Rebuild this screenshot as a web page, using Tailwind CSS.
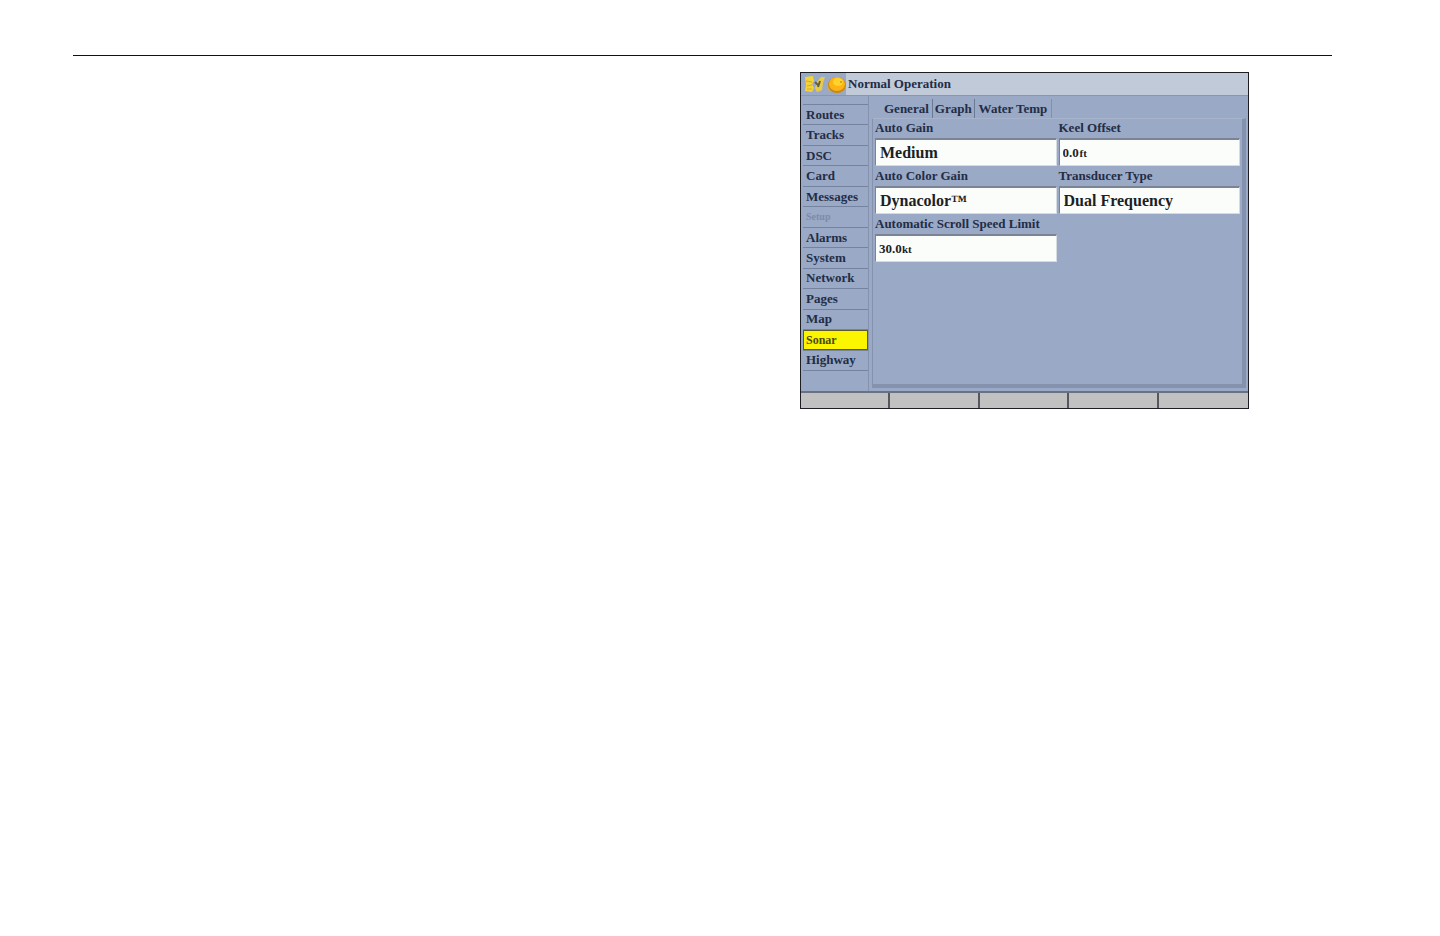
<!DOCTYPE html>
<html lang="en">

<head>
    <meta charset="UTF-8">
    <meta name="viewport" content="width=device-width, initial-scale=1.0">
    <title>Normal Operation</title>
    <script src="https://cdn.jsdelivr.net/npm/@tailwindcss/browser@4"></script>
</head>

<body class="bg-white font-['Liberation_Serif',serif]">

    <main class="pt-[55px] pl-[73px] pr-[108px]">
        <hr class="border-t border-[#111111]">

        <div class="mt-4 flex justify-end pr-[83px]">
            <!-- Chartplotter screen -->
            <section class="w-[449px] border border-[#1c1e24] bg-[#9aa9c5] text-[13px] leading-4 font-bold text-[#232d45]">

                <!-- Title bar -->
                <header class="flex h-[22px] items-stretch">
                    <div class="flex w-[45px] items-center pl-[3px]">
                        <svg class="h-5 w-[42px]" viewBox="0 0 42 20" aria-hidden="true">
                            <path d="M1 3 L9 2 L10 7 L8 10 L10 14 L8 18 L1 17 L2 11 Z" fill="#f3d337" />
                            <path d="M2 7 L8 8 M3 12 L8 11 M3 15 L8 15" stroke="#d9a92a" stroke-width="1" />
                            <path d="M13 8 L17 3 L21 3 L19 9 L18 16 L13 18 L11 14 Z" fill="#e9cb45" />
                            <path d="M11 8 L15 12 M16 7 L14 13" stroke="#5d6148" stroke-width="2" />
                            <path d="M23 13 L26 11 L29 8 L28 16 L25 17 Z" fill="#d9b03c" />
                            <ellipse cx="33" cy="11" rx="9" ry="8" fill="#c98715" />
                            <ellipse cx="33" cy="10" rx="8" ry="7" fill="#fbb414" />
                            <ellipse cx="34" cy="8" rx="5" ry="4" fill="#ffd32c" />
                            <circle cx="37" cy="8" r="1" fill="#d38e18" />
                        </svg>
                    </div>
                    <h1 class="flex-1 bg-[#c1cad9] pt-[3px] pl-[2px]">Normal Operation</h1>
                </header>

                <div class="flex h-[296px] border-t border-[#8996b0]">
                    <!-- Side menu -->
                    <nav class="w-[68px] border-r border-[#8492ae] pt-[8px] pl-[2px]">
                        <ul class="flex h-[267px] flex-col divide-y divide-[#75839f] border-y border-[#75839f]">
                            <li class="flex flex-1 items-center pl-[3px]"><a href="#">Routes</a></li>
                            <li class="flex flex-1 items-center pl-[3px]"><a href="#">Tracks</a></li>
                            <li class="flex flex-1 items-center pl-[3px]"><a href="#">DSC</a></li>
                            <li class="flex flex-1 items-center pl-[3px]"><a href="#">Card</a></li>
                            <li class="flex flex-1 items-center pl-[3px]"><a href="#">Messages</a></li>
                            <li class="flex flex-1 items-center pl-[3px] text-[10px] text-[#7d8ba8]"><a href="#">Setup</a></li>
                            <li class="flex flex-1 items-center pl-[3px]"><a href="#">Alarms</a></li>
                            <li class="flex flex-1 items-center pl-[3px]"><a href="#">System</a></li>
                            <li class="flex flex-1 items-center pl-[3px]"><a href="#">Network</a></li>
                            <li class="flex flex-1 items-center pl-[3px]"><a href="#">Pages</a></li>
                            <li class="flex flex-1 items-center pl-[3px]"><a href="#">Map</a></li>
                            <li class="flex flex-1 text-xs text-[#4a4a10]"><a href="#" aria-current="page" class="flex flex-1 items-center border border-[#5c5c28] bg-[#fbf600] pl-[2px]">Sonar</a></li>
                            <li class="flex flex-1 items-center pl-[3px]"><a href="#">Highway</a></li>
                        </ul>
                    </nav>

                    <!-- Sonar settings -->
                    <div class="flex flex-1 flex-col pt-[3px] pr-[2px] pb-[3px] pl-[3px]">
                        <div class="flex h-[19px] pl-[10px]">
                            <button type="button" class="border-r border-[#6c7993] pr-[3px] pl-[2px]">General</button>
                            <button type="button" class="border-r border-[#6c7993] px-[2px]">Graph</button>
                            <button type="button" class="border-r border-[#8390aa] px-[4px]">Water Temp</button>
                        </div>
                        <form class="grid flex-1 grid-cols-2 content-start gap-x-[2px] border-t border-r-4 border-b-4 border-l border-t-[#a6b3cb] border-r-[#8592ad] border-b-[#8592ad] border-l-[#8592ad] pr-[2px] pl-[2px]">
                            <div>
                                <label for="auto-gain" class="block h-[19px] pt-px">Auto Gain</label>
                                <select id="auto-gain" class="block h-[28px] w-full appearance-none border border-t-2 border-[#d6dbe2] border-t-[#7b8494] border-l-[#7b8494] bg-[#fbfdfa] pl-[4px] text-base leading-5 font-bold text-[#1c1f26]">
                                    <option>Medium</option>
                                </select>
                            </div>
                            <div>
                                <label for="keel-offset" class="block h-[19px] pt-px">Keel Offset</label>
                                <div class="flex h-[28px] items-center border border-t-2 border-[#d6dbe2] border-t-[#7b8494] border-l-[#7b8494] bg-[#fbfdfa] pl-[3px] text-[#1c1f26]">
                                    <input id="keel-offset" type="text" value="0.0" class="w-[17px] text-[13px]">
                                    <span class="text-[11px]">ft</span>
                                </div>
                            </div>
                            <div class="mt-[2px]">
                                <label for="color-gain" class="block h-[18px]">Auto Color Gain</label>
                                <select id="color-gain" class="block h-[28px] w-full appearance-none border border-t-2 border-[#d6dbe2] border-t-[#7b8494] border-l-[#7b8494] bg-[#fbfdfa] pl-[4px] text-base leading-5 font-bold text-[#1c1f26]">
                                    <option>Dynacolor™</option>
                                </select>
                            </div>
                            <div class="mt-[2px]">
                                <label for="transducer" class="block h-[18px]">Transducer Type</label>
                                <select id="transducer" class="block h-[28px] w-full appearance-none border border-t-2 border-[#d6dbe2] border-t-[#7b8494] border-l-[#7b8494] bg-[#fbfdfa] pl-[4px] text-base leading-5 font-bold text-[#1c1f26]">
                                    <option>Dual Frequency</option>
                                </select>
                            </div>
                            <div class="mt-[2px]">
                                <label for="scroll-limit" class="block h-[18px] whitespace-nowrap">Automatic Scroll Speed Limit</label>
                                <div class="flex h-[28px] items-center border border-t-2 border-[#d6dbe2] border-t-[#7b8494] border-l-[#7b8494] bg-[#fbfdfa] pl-[3px] text-[#1c1f26]">
                                    <input id="scroll-limit" type="text" value="30.0" class="w-[23px] text-[13px]">
                                    <span class="text-[11px]">kt</span>
                                </div>
                            </div>
                        </form>
                    </div>
                </div>

                <!-- Soft keys -->
                <footer class="grid h-[17px] grid-cols-5 divide-x-2 divide-[#55585e] border-t-2 border-[#6a7180] bg-[#c1c1c1]">
                    <button type="button" aria-label="Soft key 1"></button>
                    <button type="button" aria-label="Soft key 2"></button>
                    <button type="button" aria-label="Soft key 3"></button>
                    <button type="button" aria-label="Soft key 4"></button>
                    <button type="button" aria-label="Soft key 5"></button>
                </footer>
            </section>
        </div>
    </main>

</body>

</html>
